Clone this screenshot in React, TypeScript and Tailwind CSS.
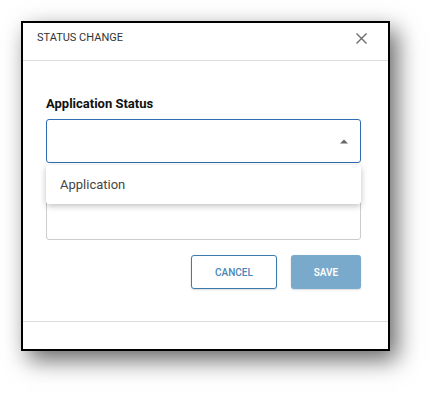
import React from "react";

export default function App() {
  return (
    <div
      className="w-[432px] h-[393px] bg-white pl-[21px] pt-[21px]"
      style={{ fontFamily: "Roboto, 'Liberation Sans', sans-serif" }}
    >
      <div className="w-[369px] h-[330px] border-2 border-black bg-white shadow-[7px_9px_22px_rgba(0,0,0,0.6)] flex flex-col">
        {/* Header */}
        <div className="h-[38px] flex items-start justify-between border-b border-[#dddddd] pl-[14px] pr-[21px] pt-[8px] shrink-0">
          <span className="text-[11px] leading-[13px] text-[#333333]">STATUS CHANGE</span>
          <svg width="11" height="11" viewBox="0 0 11 11" className="mt-[2px]">
            <path d="M0.5 0.5 L10.5 10.5 M10.5 0.5 L0.5 10.5" stroke="#6b6b6b" strokeWidth="1.4" />
          </svg>
        </div>
        {/* Body */}
        <div className="relative flex-1 pl-[23px] pr-[27px] pt-[35px] flex flex-col">
          <label className="text-[13px] leading-[15px] font-bold text-[#111111]">Application Status</label>
          <div className="mt-[8px] h-[44px] border border-[#2f6db3] rounded-[3px] flex items-center justify-end pr-[12px]">
            <svg width="8" height="5" viewBox="0 0 8 5">
              <path d="M0 4.5 L4 0.5 L8 4.5 Z" fill="#666666" />
            </svg>
          </div>
          <div className="relative">
            <div className="mt-[14px] h-[63px] border border-[#cccccc] rounded-[3px]" />
            <div className="absolute left-0 right-0 top-[2px] h-[39px] bg-white rounded-[3px] shadow-[0_2px_6px_rgba(0,0,0,0.25)] flex items-center pl-[14px]">
              <span className="text-[13px] leading-[15px] text-[#444444]">Application</span>
            </div>
          </div>
          <div className="mt-[15px] flex justify-end gap-[14px]">
            <button className="w-[86px] h-[34px] border border-[#3b7bb0] rounded-[3px] bg-white text-[10px] font-medium text-[#4a86b8] shadow-[0_1px_2px_rgba(0,0,0,0.15)]">
              CANCEL
            </button>
            <button className="w-[70px] h-[34px] rounded-[3px] bg-[#7aaacb] text-[10px] font-semibold text-white shadow-[0_1px_2px_rgba(0,0,0,0.15)]">
              SAVE
            </button>
          </div>
        </div>
        <div className="h-[28px] border-t border-[#dddddd] shrink-0" />
      </div>
    </div>
  );
}
